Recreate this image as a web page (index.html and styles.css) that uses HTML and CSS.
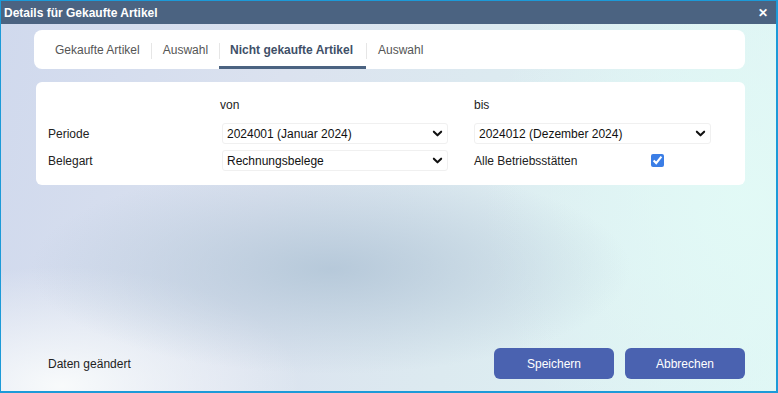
FILE: index.html
```html
<!DOCTYPE html>
<html lang="de">
<head>
    <meta charset="UTF-8">
    <meta name="viewport" content="width=device-width, initial-scale=1.0">
    <title>Details für Gekaufte Artikel</title>
    <link rel="stylesheet" href="styles.css">
</head>
<body>
    <div class="dialog">
        <div class="titlebar">
            <span class="title">Details für Gekaufte Artikel</span>
            <span class="close">&#x2715;</span>
        </div>

        <div class="content">
            <div class="tabs">
                <div class="tab">Gekaufte Artikel</div>
                <div class="tab">Auswahl</div>
                <div class="tab active">Nicht gekaufte Artikel</div>
                <div class="tab">Auswahl</div>
            </div>

            <div class="card">
                <div class="form-grid">
                    <div></div>
                    <div class="head von">von</div>
                    <div></div>
                    <div class="head">bis</div>

                    <label>Periode</label>
                    <div class="select-wrap">
                        <select>
                            <option>2024001 (Januar 2024)</option>
                        </select>
                        <svg class="chevron" viewBox="0 0 12 12" width="11" height="11"><path d="M2 4l4 4 4-4" fill="none" stroke="#111" stroke-width="2.2" stroke-linecap="round" stroke-linejoin="round"/></svg>
                    </div>
                    <div></div>
                    <div class="select-wrap">
                        <select>
                            <option>2024012 (Dezember 2024)</option>
                        </select>
                        <svg class="chevron" viewBox="0 0 12 12" width="11" height="11"><path d="M2 4l4 4 4-4" fill="none" stroke="#111" stroke-width="2.2" stroke-linecap="round" stroke-linejoin="round"/></svg>
                    </div>

                    <label>Belegart</label>
                    <div class="select-wrap">
                        <select>
                            <option>Rechnungsbelege</option>
                        </select>
                        <svg class="chevron" viewBox="0 0 12 12" width="11" height="11"><path d="M2 4l4 4 4-4" fill="none" stroke="#111" stroke-width="2.2" stroke-linecap="round" stroke-linejoin="round"/></svg>
                    </div>
                    <div></div>
                    <div class="check-row">
                        <span>Alle Betriebsstätten</span>
                        <input type="checkbox" checked>
                    </div>
                </div>
            </div>

            <div class="footer">
                <span class="status">Daten geändert</span>
                <div class="buttons">
                    <button>Speichern</button>
                    <button>Abbrechen</button>
                </div>
            </div>
        </div>
    </div>
</body>
</html>
```

FILE: styles.css
```css
html, body {
    margin: 0;
    height: 100%;
}
body {
    font-family: "Liberation Sans", Arial, sans-serif;
    font-size: 12px;
    color: #222;
}
.dialog {
    box-sizing: border-box;
    width: 778px;
    height: 393px;
    display: flex;
    flex-direction: column;
    border: 1px solid #1c9ad8;
    border-right-width: 2px;
    border-bottom-width: 2px;
    background:
        radial-gradient(ellipse 300px 105px at 330px 268px, rgba(176, 196, 214, 0.85), rgba(176, 196, 214, 0) 100%),
        radial-gradient(ellipse 240px 120px at 60px 385px, rgba(250, 252, 252, 0.95), rgba(250, 252, 252, 0) 100%),
        radial-gradient(ellipse 260px 300px at 740px 200px, rgba(226, 250, 246, 0.9), rgba(226, 250, 246, 0) 100%),
        linear-gradient(100deg, #d0d9ed 0%, #dbe2ef 35%, #dceaf0 60%, #dff6f5 100%);
}
.titlebar {
    height: 23px;
    background: #4b6381;
    color: white;
    display: flex;
    align-items: center;
    justify-content: space-between;
    padding: 0 8px 0 3px;
}
.title {
    font-weight: bold;
    font-size: 12px;
}
.close {
    font-weight: bold;
    font-size: 12px;
}
.content {
    flex: 1;
    display: flex;
    flex-direction: column;
    padding: 6px 31px 12px 33px;
}
.tabs {
    background: white;
    border-radius: 8px;
    height: 39px;
    display: flex;
    align-items: stretch;
    padding-left: 9px;
}
.tab {
    display: flex;
    align-items: center;
    padding: 0 11px 0 12px;
    color: #555;
    position: relative;
    border-bottom: 3px solid transparent;
    margin-top: 3px;
}
.tab + .tab::before {
    content: "";
    position: absolute;
    left: 0;
    top: 10px;
    height: 16px;
    border-left: 1px solid #e6e6e6;
}
.tab.active {
    font-weight: bold;
    color: #3f5068;
    border-bottom-color: #4b6381;
    padding: 0 13px 0 11px;
}
.card {
    background: white;
    border-radius: 6px;
    margin: 13px 0 0 2px;
    padding: 14px 0 14px 12px;
}
.form-grid {
    display: grid;
    grid-template-columns: 174px 226px 26px 237px;
    grid-auto-rows: 21px;
    row-gap: 6px;
    align-items: center;
}
.form-grid .head {
    margin-top: -4px;
}
.form-grid .von {
    margin-left: -2px;
}
label {
    color: #222;
}
.select-wrap {
    position: relative;
    height: 21px;
}
select {
    appearance: none;
    -webkit-appearance: none;
    width: 100%;
    height: 21px;
    border: 1px solid #f0f0f0;
    border-radius: 3px;
    background: white;
    font-family: inherit;
    font-size: 12px;
    color: #111;
    padding: 0 4px;
    box-sizing: border-box;
}
.chevron {
    position: absolute;
    right: 5px;
    top: 5px;
    pointer-events: none;
}
.check-row {
    display: flex;
    align-items: center;
}
.check-row span {
    width: 177px;
}
.check-row input {
    margin: 0;
    width: 13px;
    height: 13px;
    accent-color: #3b7ee6;
}
.footer {
    margin-top: auto;
    display: flex;
    align-items: center;
    justify-content: space-between;
    padding-left: 14px;
}
.buttons {
    display: flex;
    gap: 11px;
}
button {
    width: 120px;
    height: 31px;
    background: #4a62b0;
    color: white;
    border: none;
    border-radius: 6px;
    font-family: inherit;
    font-size: 12px;
    cursor: pointer;
}
button:hover {
    background: #3f559d;
}
```
